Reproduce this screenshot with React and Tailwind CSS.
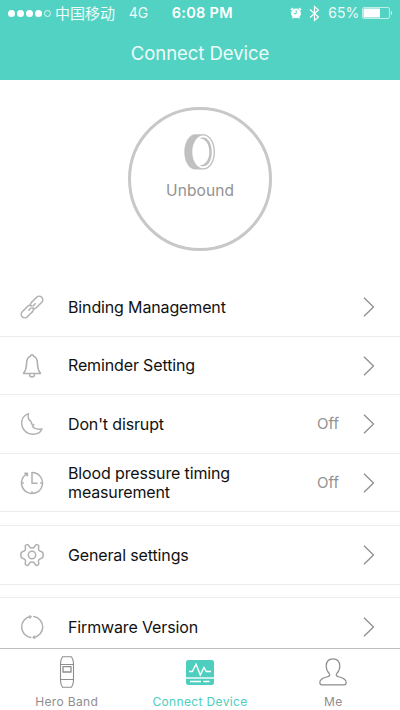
import React from "react";

const iconProps = {
  fill: "none",
  stroke: "currentColor",
  strokeLinecap: "round",
  strokeLinejoin: "round",
};

function LinkIcon() {
  return (
    <svg width="24" height="24" viewBox="0 0 24 24" strokeWidth="1.5" {...iconProps}>
      <g transform="rotate(-45 12 12)">
        <path d="M9 15.600H1.800A3.600 3.600 0 0 1 1.800 8.400H9.200A3.600 3.600 0 0 1 12.600 11" />
        <path d="M15 8.400H22.200A3.600 3.600 0 0 1 22.200 15.600H14.800A3.600 3.600 0 0 1 11.400 13" />
        <path d="M9 15.600C10.500 15.600 11.500 15 12.200 14M15 8.400C13.500 8.400 12.500 9 11.800 10" />
        <path d="M7.500 12H10.500M13.500 12H16.500" />
      </g>
    </svg>
  );
}

function BellIcon() {
  return (
    <svg width="24" height="24" viewBox="0 0 24 24" strokeWidth="1.5" {...iconProps}>
      <path d="M10.500 2.200C10.500 .4 13.500 .4 13.500 2.200C16.500 3.200 17.400 6 17.400 9.500C17.400 14 18.300 16.500 20.500 19.500H3.500C5.700 16.500 6.600 14 6.600 9.500C6.600 6 7.500 3.200 10.500 2.200Z" />
      <path d="M9.500 20.800C9.900 23.600 14.100 23.600 14.500 20.800" />
    </svg>
  );
}

function MoonIcon() {
  return (
    <svg width="24" height="24" viewBox="0 0 24 24" strokeWidth="1.4" {...iconProps}>
      <path d="M8.500 1.600C4 3.200 1.500 6.800 1.700 11.500C1.900 17.500 6.500 22 12.400 22.200C17 22.300 20.800 20.300 22 16.800C18.500 17.800 15 17.200 12.300 14.400L13.800 12.700L11.300 11.800L11.500 10C8 7.500 7.500 4.800 8.500 1.600Z" />
    </svg>
  );
}

function TimerIcon() {
  return (
    <svg width="24" height="24" viewBox="0 0 24 24" strokeWidth="1.5" {...iconProps}>
      <path d="M12 1.500A10.500 10.500 0 1 1 5 4.200" />
      <path d="M12 1.500V12.300H17" />
      <path d="M4.800 2.200H7.400V4.800Z" fill="currentColor" />
      <path d="M2 12H3.300M20.700 12H22M12 20.700V22" />
    </svg>
  );
}

function GearIcon() {
  return (
    <svg width="24" height="24" viewBox="0 0 24 24" strokeWidth="1.5" {...iconProps}>
      <circle cx="12" cy="12" r="3.7" />
      <path d="M9.400 3.900C10.800 5 13.200 5 14.600 3.900C15.400 2.600 15.500 1.100 17.100 1.600C18.300 2 19.200 2.400 18.700 4C17.900 6.200 18.800 8 21 8.500C22.800 8.700 23.200 9.500 23.200 12C23.200 14.500 22.800 15.300 21 15.500C18.800 16 17.900 17.800 18.700 20C19.200 21.600 18.300 22 17.100 22.400C15.500 22.900 15.400 21.400 14.600 20.100C13.200 19 10.800 19 9.400 20.100C8.600 21.400 8.500 22.900 6.900 22.400C5.700 22 4.800 21.600 5.300 20C6.100 17.800 5.200 16 3 15.500C1.200 15.300 .8 14.500 .8 12C.8 9.500 1.200 8.700 3 8.500C5.200 8 6.100 6.200 5.300 4C4.800 2.400 5.700 2 6.900 1.600C8.500 1.100 8.600 2.600 9.400 3.900Z" />
    </svg>
  );
}

function RefreshIcon() {
  return (
    <svg width="24" height="24" viewBox="0 0 24 24" strokeWidth="1.5" {...iconProps}>
      <path d="M10.800 22.400A10.500 10.500 0 0 1 10.500 1.600" />
      <path d="M13.800 1.600A10.500 10.500 0 0 1 13.500 22.400" />
      <path d="M9.500 1L11 1.600L9.900 2.900M14.700 21.200L13.200 22.300L14.500 23.200" />
    </svg>
  );
}

function RingIcon() {
  return (
    <svg width="32" height="36" viewBox="0 0 32 36" fill="#c0c0c0">
      <path
        fillRule="evenodd"
        d="M19.500 .3H11.500C5.500 .3 .3 8 .3 17.900S5.500 35.500 11.500 35.500H19.500C26 35.500 31 27.600 31 17.900S26 .3 19.500 .3ZM19.200 1.600C25.200 1.600 29.600 8.800 29.600 17.900S25.200 34.200 19.200 34.200S8.300 27 8.300 17.900S13.200 1.600 19.200 1.600Z"
      />
      <path d="M15.500 4.600C17 3.700 18 3.500 19.200 3.500C24.200 3.500 27.800 9.700 27.800 17.900S24.200 32.300 19.200 32.300C18 32.300 17 32.100 15.500 31.200C21 31.700 25.300 25.700 25.300 17.900S21 4.100 15.500 4.600Z" />
    </svg>
  );
}

function BandIcon() {
  return (
    <svg width="16" height="32" viewBox="0 0 16 32" strokeWidth="1.1" {...iconProps}>
      <path d="M3.500 .7H12.500C13.800 2.500 14.500 5 14.500 8V24C14.500 27 13.800 29.500 12.500 31.300H3.500C2.200 29.500 1.500 27 1.500 24V8C1.500 5 2.200 2.500 3.500 .7Z" />
      <path d="M1.500 8.500H14.500M1.500 23.500H14.500" />
      <rect x="4" y="10.700" width="8" height="5.300" strokeWidth="1.300" />
    </svg>
  );
}

function MonitorIcon() {
  return (
    <svg width="28" height="25" viewBox="0 0 28 25" fill="none" stroke="white">
      <rect width="28" height="25" rx="2.500" fill="#4dcebe" stroke="none" />
      <path d="M3 11.500H6.300L10 4.300L14.300 15L18 7.500L20.300 11.500H25" strokeWidth="1.400" />
      <path d="M0 18H28" strokeWidth="1.400" />
      <path d="M4 21.500H15M17.300 21.500H23.500" strokeWidth="1.300" />
    </svg>
  );
}

function PersonIcon() {
  return (
    <svg width="28" height="28" viewBox="0 0 28 28" strokeWidth="1.2" {...iconProps}>
      <path d="M14 .8C9.700 .8 7.200 3.600 7.200 8C7.200 11 8.300 13.500 10.200 15.500C11.400 17 10.700 18 8.500 18.700C4.500 20 .8 20.800 .8 24.500C.8 26.200 1.400 26.800 3 26.800H25C26.600 26.800 27.200 26.200 27.200 24.500C27.200 20.800 23.500 20 19.500 18.700C17.300 18 16.600 17 17.800 15.500C19.700 13.500 20.800 11 20.800 8C20.800 3.600 18.300 .8 14 .8Z" />
    </svg>
  );
}

function Chevron() {
  return (
    <svg width="12" height="20" viewBox="0 0 12 20" fill="none" stroke="#8f8f8f" strokeWidth="1.3">
      <path d="M1 .8L10.500 10L1 19.200" />
    </svg>
  );
}

function StatusBar() {
  return (
    <div className="flex h-[26px] items-center pl-2 pr-[7px] text-[14px] leading-none">
      <div className="flex w-[43px] gap-[2px]">
        <i className="size-[7px] rounded-full bg-white" />
        <i className="size-[7px] rounded-full bg-white" />
        <i className="size-[7px] rounded-full bg-white" />
        <i className="size-[7px] rounded-full bg-white" />
        <i className="size-[7px] rounded-full border border-white/80" />
      </div>
      <span className="ml-1 w-[74px] whitespace-nowrap pb-[2px] font-['Noto_Sans_CJK_SC',sans-serif] text-[15px] font-normal text-white/90">
        中国移动
      </span>
      <span className="w-[43px] text-white/90">4G</span>
      <span className="w-[119px] whitespace-nowrap text-[14.5px] font-semibold tracking-[0.3px]">
        6:08 PM
      </span>
      <svg width="12" height="12" viewBox="0 0 12 12">
        <circle cx="6" cy="6.300" r="4.900" fill="white" />
        <path d="M.8 3L3 1M11.200 3L9 1M2.500 11.500L3.500 10M9.500 11.500L8.500 10" stroke="white" strokeWidth="1.300" />
        <path d="M6.200 3.300V6.700H3.800" stroke="#52d2c2" strokeWidth="1" fill="none" />
      </svg>
      <svg className="ml-[7px]" width="11" height="17" viewBox="0 0 11 17" fill="none" stroke="white" strokeWidth="1.200">
        <path d="M1 4.500L9.500 12L5.500 15.500V1.500L9.500 5L1 12.500" />
      </svg>
      <span className="ml-2 w-[34px] whitespace-nowrap text-white/90">65%</span>
      <svg width="31" height="12" viewBox="0 0 31 12">
        <rect x=".5" y=".5" width="27" height="11" rx="1.500" fill="none" stroke="white" strokeOpacity=".8" strokeWidth=".8" />
        <rect x="1.500" y="1.500" width="16.500" height="9" rx=".5" fill="white" />
        <path d="M29 4V8C30.300 7.700 30.300 4.300 29 4Z" fill="white" />
      </svg>
    </div>
  );
}

function Row({ icon, label, value }) {
  return (
    <div className="flex h-full items-center pl-5 pr-[25px]">
      <span className="w-12 shrink-0 text-[#b0b0b0]">{icon}</span>
      <span className="w-[190px] text-[16px] leading-[18.5px] tracking-[-0.14px] text-[#111]">
        {label}
      </span>
      <span className="ml-auto mr-6 pt-px text-[15px] text-[#929292]">{value}</span>
      <Chevron />
    </div>
  );
}

function Tab({ icon, label, active }) {
  return (
    <div
      className={`flex flex-1 flex-col items-center ${active ? "text-[#4dcebe]" : "text-[#8e8e8e]"}`}
    >
      <div className="flex h-[46px] items-center">{icon}</div>
      <span className="whitespace-nowrap text-[12px] leading-[14px] tracking-[0.35px]">{label}</span>
    </div>
  );
}

export default function App() {
  return (
    <div className="flex h-[710px] w-[400px] flex-col overflow-hidden bg-white font-['Inter',sans-serif]">
      <header className="h-20 shrink-0 bg-[#52d2c2] text-white">
        <StatusBar />
        <h1 className="pt-[14px] text-center text-[18.5px] leading-[27px] tracking-[-0.05px] text-white/90">
          Connect Device
        </h1>
      </header>

      <section className="flex h-[197px] shrink-0 justify-center pt-[27px]">
        <div className="flex size-36 flex-col items-center rounded-full border-3 border-[#c8c8c8] pt-[24px]">
          <RingIcon />
          <span className="mt-[10px] text-[15.5px] leading-[22px] tracking-[0.1px] text-[#929292]">
            Unbound
          </span>
        </div>
      </section>

      {/* Settings list */}
      <main className="min-h-0 flex-1 overflow-hidden">
        <div className="h-[60px] border-b border-[#ececec] pt-px">
          <Row icon={<LinkIcon />} label="Binding Management" />
        </div>
        <div className="h-[58px] border-b border-[#ececec]">
          <Row icon={<BellIcon />} label="Reminder Setting" />
        </div>
        <div className="h-[59px] border-b border-[#ececec]">
          <Row icon={<MoonIcon />} label="Don't disrupt" value="Off" />
        </div>
        <div className="h-[58px] border-b border-[#ececec]">
          <Row icon={<TimerIcon />} label="Blood pressure timing measurement" value="Off" />
        </div>
        <div className="mt-[13px] h-[60px] border-y border-[#ececec]">
          <Row icon={<GearIcon />} label="General settings" />
        </div>
        <div className="mt-[12px] h-[59px] border-t border-[#ececec]">
          <Row icon={<RefreshIcon />} label="Firmware Version" />
        </div>
      </main>

      <nav className="flex h-[62px] shrink-0 border-t border-[#bdbdbd] bg-white">
        <Tab icon={<BandIcon />} label="Hero Band" />
        <Tab icon={<MonitorIcon />} label="Connect Device" active />
        <Tab icon={<PersonIcon />} label="Me" />
      </nav>
    </div>
  );
}
